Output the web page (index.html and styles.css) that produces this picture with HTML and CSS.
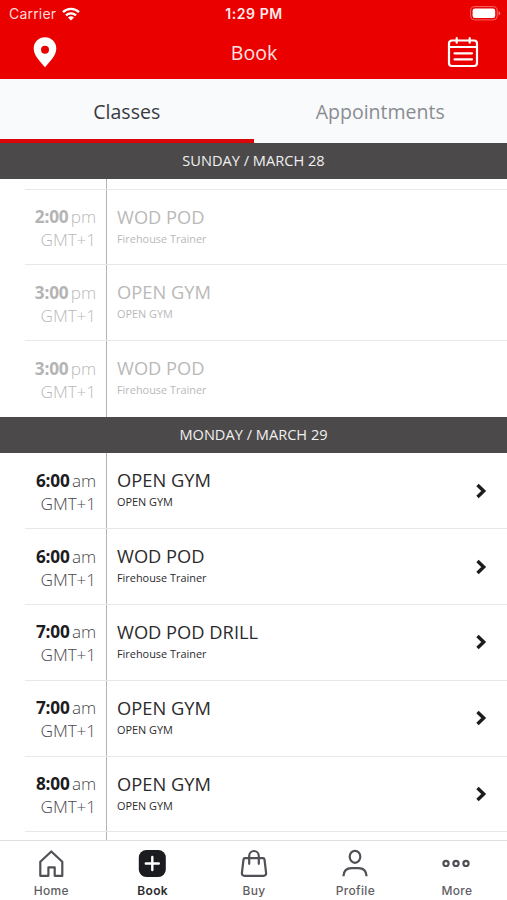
FILE: index.html
```html
<!DOCTYPE html>
<html lang="en">
<head>
  <meta charset="UTF-8" />
  <meta name="viewport" content="width=device-width, initial-scale=1.0" />
  <title>Book</title>
  <link rel="stylesheet" href="styles.css">
</head>
<body>
  <header>
    <div class="status-bar">
      <div class="carrier">
        <span>Carrier</span>
        <svg width="18" height="14" viewBox="0 0 18 14" fill="none" stroke="#fff" stroke-width="2.4">
          <path d="M1 5.2a11.4 11.4 0 0 1 16 0" />
          <path d="M4 8.4a7.2 7.2 0 0 1 10 0" />
          <path d="M9 13.6L6 10.6a4.3 4.3 0 0 1 6 0z" fill="#fff" stroke="none" />
        </svg>
      </div>
      <span class="clock">1:29 PM</span>
      <svg class="battery" width="31" height="15" viewBox="0 0 31 15">
        <rect x=".6" y=".6" width="26.6" height="13.3" rx="4" fill="none" stroke="#fff" stroke-opacity=".4" />
        <rect x="2.6" y="2.6" width="22.6" height="9.3" rx="2.2" fill="#fff" />
        <path d="M28.6 5v4.5q1.6-.8 1.6-2.2T28.6 5z" fill="#fff" fill-opacity=".5" />
      </svg>
    </div>
    <div class="nav-bar">
      <svg width="24" height="31" viewBox="0 0 24 31">
        <path d="M12 .3C5.6.3.7 5.2.7 11.6.7 18 6 23.5 12 30.3 18 23.5 23.3 18 23.3 11.6 23.3 5.2 18.4.3 12 .3zm0 8.4a4 4 0 1 1 0 8 4 4 0 0 1 0-8z" fill="#fff" fill-rule="evenodd" />
      </svg>
      <h1>Book</h1>
      <svg width="32" height="31" viewBox="0 0 32 31" fill="none" stroke="#fff" stroke-width="2.2" stroke-linecap="round">
        <rect x="2" y="3.5" width="28" height="25.5" rx="3" />
        <path d="M2 10h28M9.7 1.2v4.5M22.7 1.2v4.5M7.5 16.3h17.5M7.5 22.3h17.5" />
      </svg>
    </div>
  </header>

  <div class="tabs">
    <div class="tab active">Classes</div>
    <div class="tab">Appointments</div>
  </div>

  <main>
    <h2>SUNDAY / MARCH 28</h2>
    <section class="past">
      <div class="row cut"><div class="time"></div></div>
      <div class="row">
        <div class="time"><p><b>2:00</b> pm</p><p>GMT+1</p></div>
        <div class="info"><h3>WOD POD</h3><p>Firehouse Trainer</p></div>
      </div>
      <div class="row">
        <div class="time"><p><b>3:00</b> pm</p><p>GMT+1</p></div>
        <div class="info"><h3>OPEN GYM</h3><p>OPEN GYM</p></div>
      </div>
      <div class="row">
        <div class="time"><p><b>3:00</b> pm</p><p>GMT+1</p></div>
        <div class="info"><h3>WOD POD</h3><p>Firehouse Trainer</p></div>
      </div>
    </section>

    <h2>MONDAY / MARCH 29</h2>
    <section>
      <div class="row">
        <div class="time"><p><b>6:00</b> am</p><p>GMT+1</p></div>
        <div class="info"><h3>OPEN GYM</h3><p>OPEN GYM</p></div>
        <svg class="arrow" viewBox="0 0 12 16"><path d="M2.5 2l6.2 6-6.2 6" /></svg>
      </div>
      <div class="row">
        <div class="time"><p><b>6:00</b> am</p><p>GMT+1</p></div>
        <div class="info"><h3>WOD POD</h3><p>Firehouse Trainer</p></div>
        <svg class="arrow" viewBox="0 0 12 16"><path d="M2.5 2l6.2 6-6.2 6" /></svg>
      </div>
      <div class="row">
        <div class="time"><p><b>7:00</b> am</p><p>GMT+1</p></div>
        <div class="info"><h3>WOD POD DRILL</h3><p>Firehouse Trainer</p></div>
        <svg class="arrow" viewBox="0 0 12 16"><path d="M2.5 2l6.2 6-6.2 6" /></svg>
      </div>
      <div class="row">
        <div class="time"><p><b>7:00</b> am</p><p>GMT+1</p></div>
        <div class="info"><h3>OPEN GYM</h3><p>OPEN GYM</p></div>
        <svg class="arrow" viewBox="0 0 12 16"><path d="M2.5 2l6.2 6-6.2 6" /></svg>
      </div>
      <div class="row">
        <div class="time"><p><b>8:00</b> am</p><p>GMT+1</p></div>
        <div class="info"><h3>OPEN GYM</h3><p>OPEN GYM</p></div>
        <svg class="arrow" viewBox="0 0 12 16"><path d="M2.5 2l6.2 6-6.2 6" /></svg>
      </div>
      <div class="row cut"><div class="time"></div></div>
    </section>
  </main>

  <footer>
    <a class="item">
      <svg viewBox="0 0 30 30"><path d="M4.3 12.8L15.3 2.5l11 10.3v14h-7.6v-8.5h-6.3v8.5H4.3z" stroke-linejoin="round" /></svg>
      <span>Home</span>
    </a>
    <a class="item selected">
      <svg viewBox="0 0 30 30">
        <rect x="1.8" y="1" width="27" height="27" rx="7.5" fill="#1b1c1f" stroke="none" />
        <path d="M15.3 8v13M8.800 14.500h13" stroke="#fff" stroke-width="2.4" stroke-linecap="round" />
      </svg>
      <span>Book</span>
    </a>
    <a class="item">
      <svg viewBox="0 0 30 30">
        <path d="M6 9.2h18q1.3 0 1.5 1.3l1.6 13.5q.2 2.8-2.6 2.8H5.500q-2.8 0-2.6-2.8l1.6-13.500q.2-1.3 1.5-1.3z" />
        <path d="M10.2 14.8V7a4.8 5 0 0 1 9.600 0v7.800" stroke-linecap="round" />
      </svg>
      <span>Buy</span>
    </a>
    <a class="item">
      <svg viewBox="0 0 30 30">
        <ellipse cx="15" cy="7.8" rx="5.3" ry="6" />
        <path d="M3.4 27.3c.3-5.5 3.600-8.200 8.200-8.200h6.800c4.600 0 7.900 2.700 8.200 8.200" />
      </svg>
      <span>Profile</span>
    </a>
    <a class="item">
      <svg viewBox="0 0 30 30">
        <circle cx="5" cy="14.4" r="2.6" />
        <circle cx="15" cy="14.4" r="2.6" />
        <circle cx="25" cy="14.4" r="2.6" />
      </svg>
      <span>More</span>
    </a>
  </footer>
</body>
</html>
```
FILE: styles.css
```css
* {
  box-sizing: border-box;
}
body {
  margin: 0;
  height: 900px;
  display: flex;
  flex-direction: column;
  overflow: hidden;
  font-family: "Open Sans", sans-serif;
  background: #fff;
  color: #2b2b2d;
}
h1, h2, h3, p {
  margin: 0;
  font-weight: 400;
}
header {
  height: 79px;
  flex: none;
  background: #eb0000;
  color: #fff;
}
.status-bar {
  display: grid;
  grid-template-columns: 1fr auto 1fr;
  align-items: center;
  height: 27px;
  padding: 0 6px 0 9px;
  font-family: Inter, sans-serif;
  font-size: 14px;
}
.carrier {
  display: flex;
  align-items: center;
  gap: 6px;
  letter-spacing: .2px;
  color: #ffdada;
}
.clock {
  margin-right: 2px;
  font-weight: 600;
  letter-spacing: .6px;
  color: #ffeaea;
}
.battery {
  justify-self: end;
}
.nav-bar {
  display: flex;
  align-items: center;
  justify-content: space-between;
  height: 50px;
  padding: 0 28px 0 33px;
}
.nav-bar h1 {
  margin-left: 4px;
  font-size: 19.5px;
  color: #ffe2e2;
}
.tabs {
  display: flex;
  flex: none;
  height: 63.5px;
  background: #f8fafc;
}
.tab {
  flex: 1;
  line-height: 65px;
  text-align: center;
  font-size: 19.5px;
  color: #8b8c91;
}
.tab.active {
  color: #3a3b3f;
  border-bottom: 4px solid #dc060a;
}
main {
  flex: 1;
  min-height: 0;
  overflow: hidden;
}
h2 {
  height: 36.5px;
  line-height: 35px;
  text-align: center;
  font-size: 14.6px;
  color: #f0f0f0;
  background: #4b4949;
}
.row {
  position: relative;
  display: flex;
  height: 75.8px;
}
.row::after {
  content: "";
  position: absolute;
  left: 25px;
  right: 0;
  bottom: 0;
  border-bottom: 1px solid #e8e8e8;
}
.row:last-child:not(.cut)::after {
  display: none;
}
.row.cut {
  height: 10.5px;
}
section:last-child .row.cut::after {
  display: none;
}
.time {
  width: 107px;
  padding: 15.5px 10px 0 0;
  border-right: 1px solid #b4b4b4;
  text-align: right;
  font-family: "Open Sans Light", "Open Sans", sans-serif;
  font-size: 17.2px;
  font-weight: 300;
  line-height: 23px;
  letter-spacing: -.1px;
  white-space: nowrap;
  color: #48484b;
}
.time b {
  margin-right: -2px;
  font-family: "Open Sans", sans-serif;
  font-weight: 700;
  letter-spacing: -.2px;
  color: #1c1c1e;
}
.info {
  flex: 1;
  padding: 15px 0 0 10px;
}
.info h3 {
  font-size: 18.3px;
  line-height: 24px;
}
.info p {
  font-size: 10.9px;
  line-height: 20px;
}
.past .time, .past .info {
  color: #b9b9b9;
}
.past .time b {
  color: #b4b4b4;
}
.arrow {
  width: 12px;
  height: 16px;
  margin: 29.5px 20px 0 0;
  fill: none;
  stroke: #1c1c1e;
  stroke-width: 3.4;
}
footer {
  display: flex;
  flex: none;
  height: 60px;
  border-top: 1px solid #dedede;
  background: #fff;
}
.item {
  flex: 1;
  display: flex;
  flex-direction: column;
  align-items: center;
  padding-top: 8px;
  font-family: Inter, sans-serif;
  font-size: 12px;
  font-weight: 500;
  letter-spacing: .3px;
  color: #5f6064;
}
.item svg {
  width: 30px;
  height: 30px;
  fill: none;
  stroke: #505156;
  stroke-width: 2.2;
}
.item span {
  margin: 4px 0 0 1px;
  line-height: 15px;
}
.item.selected {
  font-weight: 600;
  color: #2b2b2d;
}
```
